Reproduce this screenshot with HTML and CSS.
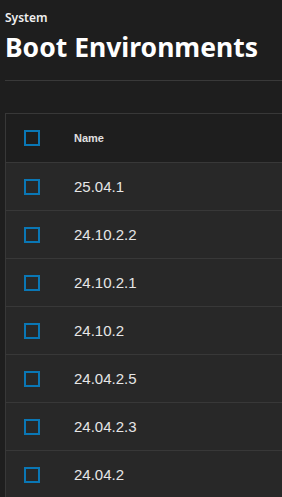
FILE: index.html
```html
<!DOCTYPE html>
<html lang="en">
<head>
    <meta charset="UTF-8">
    <meta name="viewport" content="width=device-width, initial-scale=1.0">
    <title>Boot Environments</title>
    <link rel="stylesheet" href="styles.css">
</head>
<body>

    <div class="page-header">
        <div class="breadcrumb">System</div>
        <h1>Boot Environments</h1>
    </div>

    <div class="table-card">
        <div class="row header-row">
            <span class="checkbox"></span>
            <span class="cell-name">Name</span>
        </div>
        <div class="row"><span class="checkbox"></span><span class="cell-name">25.04.1</span></div>
        <div class="row"><span class="checkbox"></span><span class="cell-name">24.10.2.2</span></div>
        <div class="row"><span class="checkbox"></span><span class="cell-name">24.10.2.1</span></div>
        <div class="row"><span class="checkbox"></span><span class="cell-name">24.10.2</span></div>
        <div class="row"><span class="checkbox"></span><span class="cell-name">24.04.2.5</span></div>
        <div class="row"><span class="checkbox"></span><span class="cell-name">24.04.2.3</span></div>
        <div class="row"><span class="checkbox"></span><span class="cell-name">24.04.2</span></div>
    </div>

</body>
</html>
```

FILE: styles.css
```css
html, body {
    overflow: hidden;
}
body {
    margin: 0;
    padding: 0 0 0 5px;
    background-color: #1e1e1e;
    color: #e6e6e6;
    font-family: "Liberation Sans", Arial, sans-serif;
}
.page-header {
    padding-top: 10px;
    border-bottom: 1px solid #393939;
    height: 81px;
    box-sizing: border-box;
}
.breadcrumb {
    font-family: "Noto Sans", sans-serif;
    font-size: 12px;
    font-weight: 600;
    line-height: 16px;
    color: #f0f0f0;
}
h1 {
    margin: 4px 0 0 0;
    font-family: "Noto Sans", sans-serif;
    font-size: 26.5px;
    font-weight: 700;
    line-height: 34px;
    color: #ffffff;
}
.table-card {
    margin-top: 32px;
    border-top: 1px solid #383838;
    border-left: 1px solid #383838;
    background-color: #282828;
}
.row {
    display: flex;
    align-items: center;
    height: 47px;
    border-bottom: 1px solid #383838;
}
.header-row {
    height: 48px;
    background-color: #1e1e1e;
}
.checkbox {
    width: 12px;
    height: 12px;
    border: 2px solid #0a77b5;
    margin-left: 18px;
    margin-right: 34px;
    flex-shrink: 0;
}
.cell-name {
    font-size: 15px;
    color: #e6e6e6;
}
.header-row .cell-name {
    font-size: 11px;
    font-weight: 700;
    color: #e0e0e0;
}
```
